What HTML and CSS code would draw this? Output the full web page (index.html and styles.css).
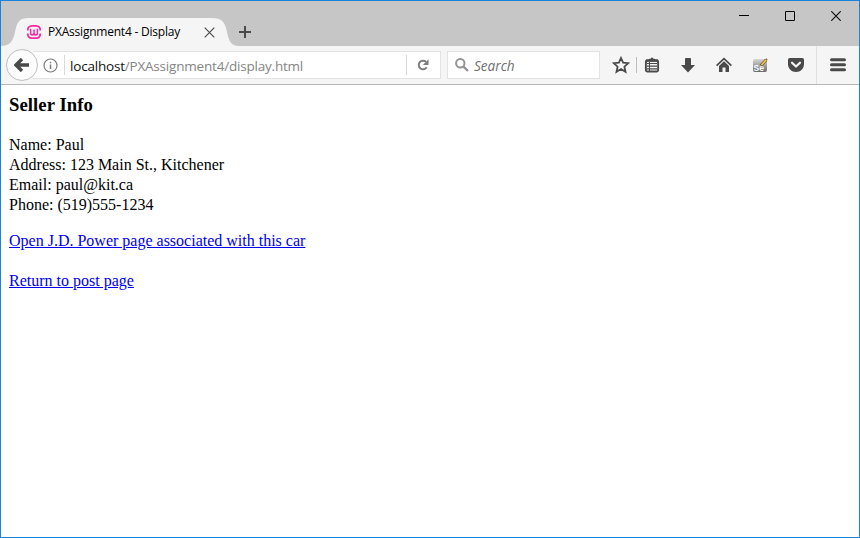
FILE: index.html
```html
<!DOCTYPE html>
<html lang="en">
<head>
<meta charset="utf-8">
<title>PXAssignment4 - Display</title>
<link rel="stylesheet" href="styles.css">
</head>
<body>
<div class="window">
  <header class="titlebar">
    <div class="tab">
      <svg class="tab-shape" width="238" height="28" viewBox="0 0 238 28"><path d="M0 28C9 28 12 23 14 14C16 4 18 0 28 0H211C221 0 224 4 226 14C228 23 230 28 238 28Z" fill="#f5f5f5"/></svg>
      <svg class="favicon" width="16" height="16" viewBox="0 0 16 16" fill="none" stroke="#f32aa4"><path d="M1.8 6.6V5.6Q2 2 5.8 1.8H10.2Q14 2 14.2 5.6V6.6M14.2 9.4V10.4Q14 14 10.2 14.2H5.8Q2 14 1.8 10.4V9.4" stroke-width="1.7"/><path d="M4.6 4.8V9Q4.6 10.9 6.3 10.9Q8 10.9 8 9V5.4V9Q8 10.9 9.7 10.9Q11.4 10.9 11.4 9V4.8" stroke-width="1.5"/></svg>
      <span class="tab-title">PXAssignment4 - Display</span>
      <svg class="tab-close" width="11" height="11" viewBox="0 0 11 11"><path d="M.7 .7L10.3 10.3M10.3 .7L.7 10.3" stroke="#4d4d4d" stroke-width="1.2"/></svg>
    </div>
    <svg class="new-tab" width="12" height="12" viewBox="0 0 12 12"><path d="M6 0V12M0 6H12" stroke="#4a4a4a" stroke-width="2"/></svg>
    <div class="controls">
      <svg width="10" height="10" viewBox="0 0 10 10"><path d="M0 4.5H10" stroke="#000"/></svg>
      <svg width="10" height="10" viewBox="0 0 10 10"><path d="M.5 .5H9.5V9.5H.5Z" fill="none" stroke="#000"/></svg>
      <svg width="10" height="10" viewBox="0 0 10 10"><path d="M.3 .3L9.7 9.7M9.7 .3L.3 9.7" stroke="#111" stroke-width="1.2"/></svg>
    </div>
  </header>
  <nav class="toolbar">
    <div class="back"><svg width="16" height="14" viewBox="0 0 16 14"><path d="M8 1L2 7L8 13M2.5 7H15" fill="none" stroke="#4a4a4a" stroke-width="3.4"/></svg></div>
    <div class="address">
      <svg class="info" width="15" height="15" viewBox="0 0 15 15"><circle cx="7.5" cy="7.5" r="6.5" fill="none" stroke="#7c7c7c" stroke-width="1.2"/><path d="M7.5 6.5V11M7.5 3.7V5.2" stroke="#7c7c7c" stroke-width="1.5"/></svg>
      <i class="rule"></i>
      <span class="url">localhost<span class="path">/PXAssignment4/display.html</span></span>
      <i class="rule reload-rule"></i>
      <svg class="reload" width="12" height="12" viewBox="0 0 12 12"><path d="M9 2.8A4.3 4.3 0 1 0 9.7 8.3" fill="none" stroke="#7d7d7d" stroke-width="2"/><path d="M11.5 .3V6H5.8Z" fill="#7d7d7d"/></svg>
    </div>
    <div class="search">
      <svg width="14" height="14" viewBox="0 0 14 14" fill="none" stroke="#949494"><circle cx="5.3" cy="5.3" r="4.2" stroke-width="2"/><path d="M8.3 8.3L13 13" stroke-width="2.4"/></svg>
      <span class="hint">Search</span>
    </div>
    <div class="actions">
      <svg class="star" width="18" height="18" viewBox="0 0 18 18"><path d="M9 2L11.1 6.7L16.2 7.2L12.4 10.7L13.5 15.8L9 13.1L4.5 15.8L5.6 10.7L1.8 7.2L6.9 6.7Z" fill="none" stroke="#4a4a4a" stroke-width="1.8"/></svg>
      <i class="mini-rule"></i>
      <svg class="list" width="18" height="18" viewBox="0 0 18 18"><path d="M6 4V2.8H7.5L9 1.2L10.5 2.8H12V4Z" fill="#4a4a4a"/><rect x="2.9" y="4.5" width="12.2" height="11" rx="1.2" fill="none" stroke="#4a4a4a" stroke-width="1.9"/><path d="M3 4.6H15" stroke="#4a4a4a" stroke-width="2.4"/><path d="M4 7.5H14M4 10.2H14M4 12.9H14" stroke="#4a4a4a" stroke-width="1.2"/><path d="M6.5 6V15" stroke="#4a4a4a"/></svg>
      <svg width="18" height="18" viewBox="0 0 18 18"><path d="M6 3Q6 2 7 2H11Q12 2 12 3V9H16L9 16.5L2 9H6Z" fill="#4a4a4a"/></svg>
      <svg width="18" height="18" viewBox="0 0 18 18"><path d="M1.6 9.7L9 2.7L16.4 9.7" fill="none" stroke="#4a4a4a" stroke-width="1.7"/><path d="M4 10L9 5.2L14 10V16H10.5V11.5H7.5V16H4Z" fill="#4a4a4a"/></svg>
      <svg width="18" height="18" viewBox="0 0 18 18"><defs><linearGradient id="tile" x2="0" y2="1"><stop stop-color="#d7d7d7"/><stop offset="1" stop-color="#696969"/></linearGradient></defs><rect x="2" y="3" width="14" height="13" rx="2" fill="url(#tile)"/><text class="tile-text" x="2.5" y="15">Se</text><path d="M10 9.5L15 4" stroke="#665329" stroke-width="3"/><path d="M10.5 9L15.5 3.5" stroke="#f1c84c" stroke-width="1.8"/><path d="M15 4L16 3" stroke="#8b584c" stroke-width="2"/></svg>
      <svg class="pocket" width="18" height="18" viewBox="0 0 18 18"><path d="M2.8 2H15.2Q17 2 17 3.8V8C17 12.5 13.5 16 9 16S1 12.5 1 8V3.8Q1 2 2.8 2Z" fill="#4a4a4a"/><path d="M5 6.7L9 10.5L13 6.7" fill="none" stroke="#f5f5f5" stroke-width="2.2" stroke-linecap="round" stroke-linejoin="round"/></svg>
      <i class="menu-rule"></i>
      <svg class="menu" width="16" height="14" viewBox="0 0 16 14"><path d="M1.5 1.7H14.5M1.5 6.7H14.5M1.5 11.7H14.5" stroke="#4a4a4a" stroke-width="3" stroke-linecap="round"/></svg>
    </div>
  </nav>
  <main class="page">
    <h3 class="heading">Seller Info</h3>
    <div class="details">
      <div>Name: Paul</div>
      <div>Address: 123 Main St., Kitchener</div>
      <div>Email: paul@kit.ca</div>
      <div>Phone: (519)555-1234</div>
    </div>
    <p class="links"><a href="#">Open J.D. Power page associated with this car</a><br><br><a href="#">Return to post page</a></p>
  </main>
</div>
</body>
</html>
```
FILE: styles.css
```css
* { box-sizing: border-box; }
body { margin: 0; background: #fff; }
svg { display: block; flex: none; }
.window { width: 860px; height: 538px; border: 1px solid #1c83d8; overflow: hidden; }

.titlebar { display: flex; height: 45px; background: #c6c6c6; }
.tab { position: relative; display: flex; align-items: center; width: 238px; height: 28px; margin-top: 17px; padding-left: 25px; }
.tab-shape { position: absolute; left: 0; top: 0; }
.favicon { position: relative; margin-right: 6px; }
.tab-title { position: relative; width: 150px; font: 12px/16px "Open Sans", sans-serif; letter-spacing: -0.22px; white-space: nowrap; color: #000; }
.tab-close { position: relative; margin-left: 6px; }
.new-tab { margin: 25px 0 0 0; }
.controls { display: flex; gap: 36px; margin: 10px 18px 0 auto; }

.toolbar { display: flex; align-items: center; height: 39px; padding: 0 0 0 5px; background: #f5f5f5; border-bottom: 1px solid #b9b9b9; }
.back { position: relative; display: flex; align-items: center; justify-content: center; width: 32px; height: 32px; flex: none; border: 1px solid #bfbfbf; border-radius: 50%; background: #fcfcfc; }
.address { display: flex; align-items: center; width: 408px; height: 28px; margin-left: -5px; padding-left: 10px; background: #fff; border: 1px solid #e2e2e2; border-left: 0; }
.rule { width: 1px; height: 20px; margin-left: 6px; background: #d9d9d9; flex: none; }
.url { width: 336px; margin-left: 5px; padding-top: 2px; font: 13.5px/20px "Open Sans", sans-serif; letter-spacing: -0.2px; white-space: nowrap; color: #111; }
.path { color: #858585; }
.reload-rule { margin-left: 0; }
.reload { margin-left: 10px; }
.search { display: flex; align-items: center; width: 153px; height: 28px; margin-left: 6px; padding: 0 0 1px 7px; background: #fff; border: 1px solid #e2e2e2; }
.hint { margin: 2px 0 0 5px; font: italic 13.6px/20px "Open Sans", sans-serif; color: #707070; }
.actions { display: flex; align-items: center; height: 38px; margin-left: 12px; }
.mini-rule { width: 1px; height: 16px; margin: 0 6px; background: #bebebe; }
.actions svg + svg { margin-left: 18px; }
.menu-rule { width: 1px; height: 38px; margin: 0 13px 0 11px; background: #dfdfdf; }
.tile-text { font: bold 8.5px "Liberation Sans", sans-serif; fill: #fff; }

.page { padding: 10px 8px; font: 16px/20px "Liberation Serif", serif; color: #000; }
.heading { margin: 0 0 20px; font-size: 18.72px; line-height: 20px; letter-spacing: 0.05px; }
.links { margin: 16px 0; }
a { color: #0000ee; text-decoration: underline; }
```
